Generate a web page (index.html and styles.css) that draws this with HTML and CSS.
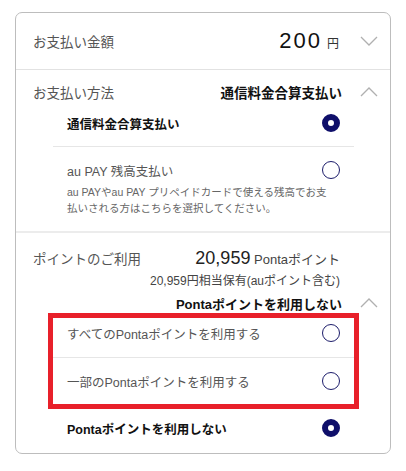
FILE: index.html
```html
<!DOCTYPE html>
<html lang="ja">
<head>
    <meta charset="UTF-8">
    <meta name="viewport" content="width=device-width, initial-scale=1.0">
    <title>お支払い</title>
    <link rel="stylesheet" href="styles.css">
</head>
<body>
    <div class="card">
        <!-- amount -->
        <div class="row amount">
            <span class="label">お支払い金額</span>
            <span class="amount-value"><span class="price">200</span><span class="yen">円</span></span>
            <svg class="chevron" width="18" height="10" viewBox="0 0 18 10"><polyline points="1,1 9,9 17,1"/></svg>
        </div>

        <!-- payment method -->
        <div class="section method">
            <div class="head">
                <span class="label">お支払い方法</span>
                <span class="value-bold">通信料金合算支払い</span>
                <svg class="chevron" width="18" height="10" viewBox="0 0 18 10"><polyline points="1,9 9,1 17,9"/></svg>
            </div>
            <div class="options">
                <div class="option first">
                    <div class="opt-main">
                        <span class="opt-label on">通信料金合算支払い</span>
                        <span class="radio checked"></span>
                    </div>
                </div>
                <div class="option">
                    <div class="opt-main">
                        <span class="opt-label">au PAY 残高支払い</span>
                        <span class="radio"></span>
                    </div>
                    <p class="opt-desc">au PAYやau PAY プリペイドカードで使える残高でお支<br>払いされる方はこちらを選択してください。</p>
                </div>
            </div>
        </div>

        <!-- points -->
        <div class="section points">
            <div class="points-line">
                <span class="label">ポイントのご利用</span>
                <span class="points-total"><span class="pts">20,959</span> Pontaポイント</span>
            </div>
            <div class="points-note">20,959円相当保有(auポイント含む)</div>
            <div class="points-choice">
                <span class="value-bold">Pontaポイントを利用しない</span>
                <svg class="chevron" width="18" height="10" viewBox="0 0 18 10"><polyline points="1,9 9,1 17,9"/></svg>
            </div>

            <div class="highlight">
                <div class="option hl-first">
                    <div class="opt-main">
                        <span class="opt-label">すべてのPontaポイントを利用する</span>
                        <span class="radio"></span>
                    </div>
                </div>
                <div class="option hl-second">
                    <div class="opt-main">
                        <span class="opt-label">一部のPontaポイントを利用する</span>
                        <span class="radio"></span>
                    </div>
                </div>
            </div>

            <div class="option last">
                <div class="opt-main">
                    <span class="opt-label on">Pontaポイントを利用しない</span>
                    <span class="radio checked"></span>
                </div>
            </div>
        </div>
    </div>
</body>
</html>
```

FILE: styles.css
```css
body {
    margin: 0;
    background: #fff;
    font-family: 'Liberation Sans', 'Noto Sans CJK JP', sans-serif;
    color: #333;
}
.card {
    margin: 12px 15px 0;
    border: 1px solid #bdbdbd;
    border-radius: 7px;
    height: 442px;
    box-sizing: border-box;
}
.label {
    font-size: 13.5px;
    color: #555;
    flex: 1;
}
.chevron {
    fill: none;
    stroke: #b0b0b0;
    stroke-width: 1.3;
    margin-left: 18px;
    flex: none;
}
.value-bold {
    font-size: 13.5px;
    font-weight: bold;
    color: #111;
}

/* amount row */
.amount {
    display: flex;
    align-items: center;
    height: 56px;
    padding: 0 12px 0 17px;
    border-bottom: 1px solid #e2e2e2;
}
.amount-value {
    display: flex;
    align-items: baseline;
    padding-right: 3px;
}
.price {
    font-size: 22px;
    letter-spacing: 2px;
    color: #111;
}
.yen {
    font-size: 12px;
    color: #333;
    margin-left: 5px;
}

/* sections */
.method {
    border-bottom: 2px solid #ececec;
    padding-bottom: 15px;
}
.head {
    display: flex;
    align-items: center;
    height: 20px;
    padding: 12px 12px 0 17px;
}
.options {
    margin: 0 36px 0 37px;
}
.option {
    padding: 0 14px;
}
.option.first {
    padding-top: 11px;
    padding-bottom: 13px;
    border-bottom: 1px solid #e6e6e6;
}
.option + .option {
    padding-top: 13px;
}
.opt-main {
    display: flex;
    align-items: center;
    justify-content: space-between;
    height: 20px;
}
.opt-label {
    font-size: 12.5px;
    color: #555;
}
.opt-label.on {
    font-weight: bold;
    color: #111;
}
.opt-desc {
    margin: 4px 0 0;
    font-size: 10.5px;
    line-height: 16px;
    color: #666;
    white-space: nowrap;
}
.radio {
    width: 18px;
    height: 18px;
    box-sizing: border-box;
    border-radius: 50%;
    border: 1.2px solid #1d1d6b;
    flex: none;
}
.radio.checked {
    border: 6px solid #0f0f6a;
    background: #fff;
}

/* points */
.points {
    padding-top: 13px;
}
.points-line {
    display: flex;
    align-items: baseline;
    height: 24px;
    line-height: 24px;
    padding: 0 50px 0 17px;
}
.points-total {
    font-size: 13px;
    color: #444;
}
.pts {
    font-size: 18px;
    color: #222;
}
.points-note {
    margin-top: 2px;
    height: 18px;
    line-height: 18px;
    font-size: 12px;
    color: #444;
    text-align: right;
    padding-right: 50px;
}
.points-choice {
    display: flex;
    align-items: center;
    justify-content: flex-end;
    height: 20px;
    margin-top: 3px;
    padding-right: 12px;
}
.points-choice .value-bold {
    font-size: 13px;
}
.highlight {
    margin: 0 31px 0 32px;
    border: 5px solid #e8202a;
}
.option.hl-first {
    padding-top: 5px;
    padding-bottom: 14px;
    border-bottom: 1px solid #e6e6e6;
}
.option.hl-second {
    padding-top: 13px;
    padding-bottom: 13px;
}
.option.last {
    margin: 0 36px 0 37px;
    padding-top: 9px;
}
```
